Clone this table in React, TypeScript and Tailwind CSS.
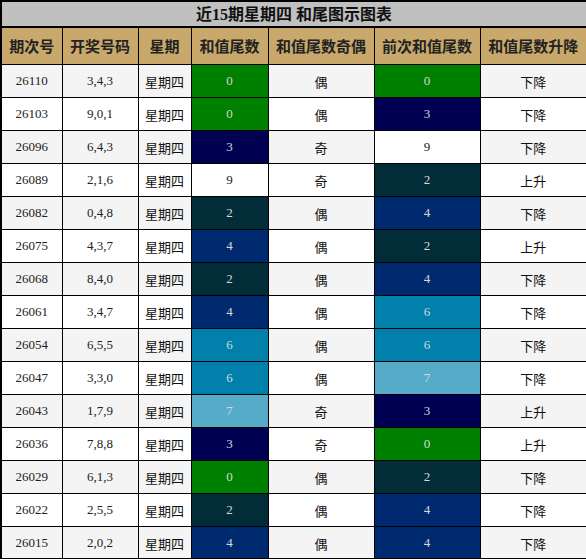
import React from "react";

const colorMap: Record<string, string> = {
  "0": "bg-[#008000] text-[#d8d8d8]",
  "2": "bg-[#022d38] text-[#d8d8d8]",
  "3": "bg-[#000052] text-[#d8d8d8]",
  "4": "bg-[#002a70] text-[#d8d8d8]",
  "6": "bg-[#0080aa] text-[#d8d8d8]",
  "7": "bg-[#56abc8] text-[#d8d8d8]",
  "9": "bg-white text-[#222222]",
};

const rows: [string, string, string, string, string, string][] = [
  ["26110", "3,4,3", "0", "偶", "0", "下降"],
  ["26103", "9,0,1", "0", "偶", "3", "下降"],
  ["26096", "6,4,3", "3", "奇", "9", "下降"],
  ["26089", "2,1,6", "9", "奇", "2", "上升"],
  ["26082", "0,4,8", "2", "偶", "4", "下降"],
  ["26075", "4,3,7", "4", "偶", "2", "上升"],
  ["26068", "8,4,0", "2", "偶", "4", "下降"],
  ["26061", "3,4,7", "4", "偶", "6", "下降"],
  ["26054", "6,5,5", "6", "偶", "6", "下降"],
  ["26047", "3,3,0", "6", "偶", "7", "下降"],
  ["26043", "1,7,9", "7", "奇", "3", "上升"],
  ["26036", "7,8,8", "3", "奇", "0", "上升"],
  ["26029", "6,1,3", "0", "偶", "2", "下降"],
  ["26022", "2,5,5", "2", "偶", "4", "下降"],
  ["26015", "2,0,2", "4", "偶", "4", "下降"],
];

const serif = "font-['Liberation_Serif','Noto_Sans_CJK_SC',serif]";
const cjk = "font-['Noto_Sans_CJK_SC',sans-serif]";

export default function App() {
  const headers = ["期次号", "开奖号码", "星期", "和值尾数", "和值尾数奇偶", "前次和值尾数", "和值尾数升降"];
  const widths = ["w-[61px]", "w-[76px]", "w-[53px]", "w-[77px]", "w-[106px]", "w-[106px]", "w-[107px]"];
  return (
    <div className="w-[586px] bg-white">
      <table className="w-[586px] border-collapse table-fixed border-2 border-black">
        <colgroup>
          {widths.map((w, i) => (
            <col key={i} className={w} />
          ))}
        </colgroup>
        <thead>
          <tr className="h-[26px]">
            <th
              colSpan={7}
              className={`bg-[#c0c0c0] border-2 border-black text-[16px] font-bold text-[#111] leading-none p-0 ${cjk}`}
            >
              <span className={serif}>近15期星期四 和尾图示图表</span>
            </th>
          </tr>
          <tr className="h-[37px]">
            {headers.map((h) => (
              <th
                key={h}
                className={`bg-[#c8a86b] border border-black text-[15px] font-bold text-[#222] p-0 leading-none ${cjk}`}
              >
                {h}
              </th>
            ))}
          </tr>
        </thead>
        <tbody>
          {rows.map((r, i) => {
            const bg = i % 2 === 0 ? "bg-[#f4f4f4]" : "bg-white";
            return (
              <tr key={r[0]} className={`h-[33px] ${bg}`}>
                <td className={`border border-black text-center text-[13px] text-[#222] p-0 ${serif}`}>{r[0]}</td>
                <td className={`border border-black text-center text-[13px] text-[#222] p-0 ${serif}`}>{r[1]}</td>
                <td className={`border border-black text-center text-[13px] text-[#111] p-0 pt-[2px] ${cjk}`}>星期四</td>
                <td className={`border border-black text-center text-[13px] p-0 ${serif} ${colorMap[r[2]]}`}>{r[2]}</td>
                <td className={`border border-black text-center text-[13px] text-[#111] p-0 pt-[2px] ${cjk}`}>{r[3]}</td>
                <td className={`border border-black text-center text-[13px] p-0 ${serif} ${colorMap[r[4]]}`}>{r[4]}</td>
                <td className={`border border-black text-center text-[13px] text-[#111] p-0 pt-[2px] ${cjk}`}>{r[5]}</td>
              </tr>
            );
          })}
        </tbody>
      </table>
    </div>
  );
}
